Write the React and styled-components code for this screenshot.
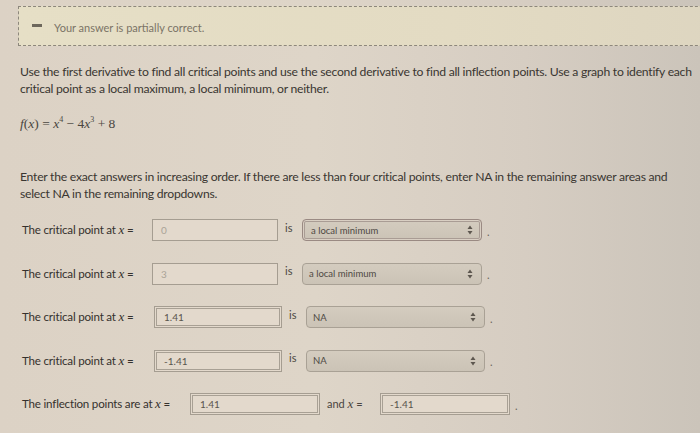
import React from "react";
import styled, { createGlobalStyle } from "styled-components";

const Global = createGlobalStyle`
  html, body {
    margin: 0;
    padding: 0;
  }
  body {
    width: 700px;
    height: 433px;
    overflow: hidden;
    font-family: Lato, "Open Sans", sans-serif;
    color: #3b3733;
    background: linear-gradient(90deg, #dcd2c5 0%, #ded5c8 45%, #d6cdc2 75%, #cbc4ba 100%);
  }
`;

const rows = [
  { value: "0", choice: "a local minimum", labelW: 130, inputW: 126, double: false, selectW: 180, selectRed: true, valueFaint: true },
  { value: "3", choice: "a local minimum", labelW: 130, inputW: 126, double: false, selectW: 180, selectRed: false, valueFaint: true },
  { value: "1.41", choice: "NA", labelW: 132, inputW: 128, double: true, selectW: 179, selectRed: false },
  { value: "-1.41", choice: "NA", labelW: 132, inputW: 128, double: true, selectW: 179, selectRed: false },
];

function Updown() {
  return (
    <svg width="6" height="10" viewBox="0 0 6 10">
      <path d="M3 0.5 L5.5 4 L0.5 4 Z" fill="#5d574f" />
      <path d="M3 9.5 L5.5 6 L0.5 6 Z" fill="#5d574f" />
    </svg>
  );
}

function X() {
  return <Var>x</Var>;
}

function App() {
  return (
    <Page>
      <Global />
      <Banner>
        <Minus />
        <BannerText>Your answer is partially correct.</BannerText>
      </Banner>
      <Content>
        <Para>
          Use the first derivative to find all critical points and use the second derivative to find all inflection points. Use a graph to identify each
          <br />
          critical point as a local maximum, a local minimum, or neither.
        </Para>
        <Formula>
          <i>f</i>(<i>x</i>) = <i>x</i>
          <sup>4</sup> − 4<i>x</i>
          <sup>3</sup> + 8
        </Formula>
        <Para $top={36}>
          Enter the exact answers in increasing order. If there are less than four critical points, enter NA in the remaining answer areas and
          <br />
          select NA in the remaining dropdowns.
        </Para>
        <Rows>
          {rows.map((r, i) => (
            <Row key={i}>
              <Label $w={r.labelW}>
                The critical point at <X /> =
              </Label>
              <Input $w={r.inputW} $double={r.double} $faint={r.valueFaint}>
                {r.value}
              </Input>
              <Is>is</Is>
              <Select $w={r.selectW} $red={r.selectRed}>
                <span>{r.choice}</span>
                <Updown />
              </Select>
              <Dot>.</Dot>
            </Row>
          ))}
          <Row>
            <Label $w={168}>
              The inflection points are at <X /> =
            </Label>
            <Input $w={130} $double>
              1.41
            </Input>
            <And>
              and <X /> =
            </And>
            <Input $w={130} $double>
              -1.41
            </Input>
            <Dot>.</Dot>
          </Row>
        </Rows>
      </Content>
    </Page>
  );
}

export default App;

const Page = styled.div`
  width: 700px;
  height: 433px;
  padding-top: 6px;
  box-sizing: border-box;
  overflow: hidden;
`;

const Banner = styled.div`
  margin-left: 18px;
  height: 40px;
  width: 720px;
  box-sizing: border-box;
  border: 1.5px dashed #8d877c;
  border-right: none;
  background: linear-gradient(90deg, #e6dfc6, #e3dbc3 60%, #ddd5c0);
  display: flex;
  align-items: center;
  padding-left: 13px;
`;

const Minus = styled.div`
  width: 10px;
  height: 3px;
  background: #6d675c;
  margin-right: 12px;
  margin-top: -2px;
`;

const BannerText = styled.div`
  font-size: 11px;
  color: #7a7365;
  margin-top: 2px;
`;

const Content = styled.div`
  padding-left: 20px;
  padding-top: 17px;
`;

const Para = styled.p`
  margin: ${(p) => p.$top || 0}px 0 0;
  font-size: 12.2px;
  line-height: 17px;
  letter-spacing: -0.26px;
  white-space: nowrap;
  color: #3a3631;
`;

const Formula = styled.div`
  margin-top: 19px;
  font-family: "Liberation Serif", "DejaVu Serif", serif;
  font-size: 13.5px;
  color: #4a4641;
  i {
    font-family: "Liberation Serif", serif;
  }
  sup {
    font-size: 8px;
    vertical-align: 6px;
    line-height: 0;
  }
`;

const Var = styled.i`
  font-family: "Liberation Serif", serif;
  font-size: 13px;
`;

const Rows = styled.div`
  margin-top: 17px;
  display: flex;
  flex-direction: column;
  gap: 21.5px;
`;

const Row = styled.div`
  display: flex;
  align-items: center;
  height: 22px;
  padding-left: 2px;
`;

const Label = styled.div`
  width: ${(p) => p.$w}px;
  flex-shrink: 0;
  font-size: 11.6px;
  letter-spacing: -0.2px;
  white-space: nowrap;
  color: #35312d;
`;

const Input = styled.div`
  width: ${(p) => p.$w}px;
  height: 22px;
  box-sizing: border-box;
  flex-shrink: 0;
  display: flex;
  align-items: center;
  padding-left: ${(p) => (p.$double ? 9 : 8)}px;
  font-size: 10px;
  color: ${(p) => (p.$faint ? "#aaa397" : "#5a554e")};
  background: #e3d9cc;
  border: 1px solid #a59d91;
  box-shadow: ${(p) => (p.$double ? "inset 0 0 0 1px #e3d9cc, inset 0 0 0 2px #a8a094" : "none")};
`;

const Is = styled.div`
  font-size: 11px;
  color: #4d4843;
  width: 17px;
  padding-left: 7px;
  margin-top: -6px;
`;

const Select = styled.div`
  width: ${(p) => p.$w}px;
  height: 22px;
  box-sizing: border-box;
  flex-shrink: 0;
  display: flex;
  align-items: center;
  justify-content: space-between;
  padding: 0 8px 0 ${(p) => (p.$red ? 8 : 6)}px;
  font-size: 9.5px;
  color: #4e4944;
  background: linear-gradient(180deg, #d4ccbf, #cbc3b6);
  border: 1px solid ${(p) => (p.$red ? "#9a8a83" : "#a9a195")};
  border-radius: 4px;
  box-shadow: ${(p) => (p.$red ? "inset 0 0 0 1px #d9cfc3, inset 0 0 0 2px #a99c94" : "none")};
`;

const Dot = styled.div`
  font-size: 11px;
  color: #6b655d;
  margin-left: 5px;
  margin-top: 2px;
`;

const And = styled.div`
  font-size: 11px;
  color: #4a4540;
  padding-left: 7px;
  width: 53px;
  flex-shrink: 0;
  white-space: nowrap;
`;
